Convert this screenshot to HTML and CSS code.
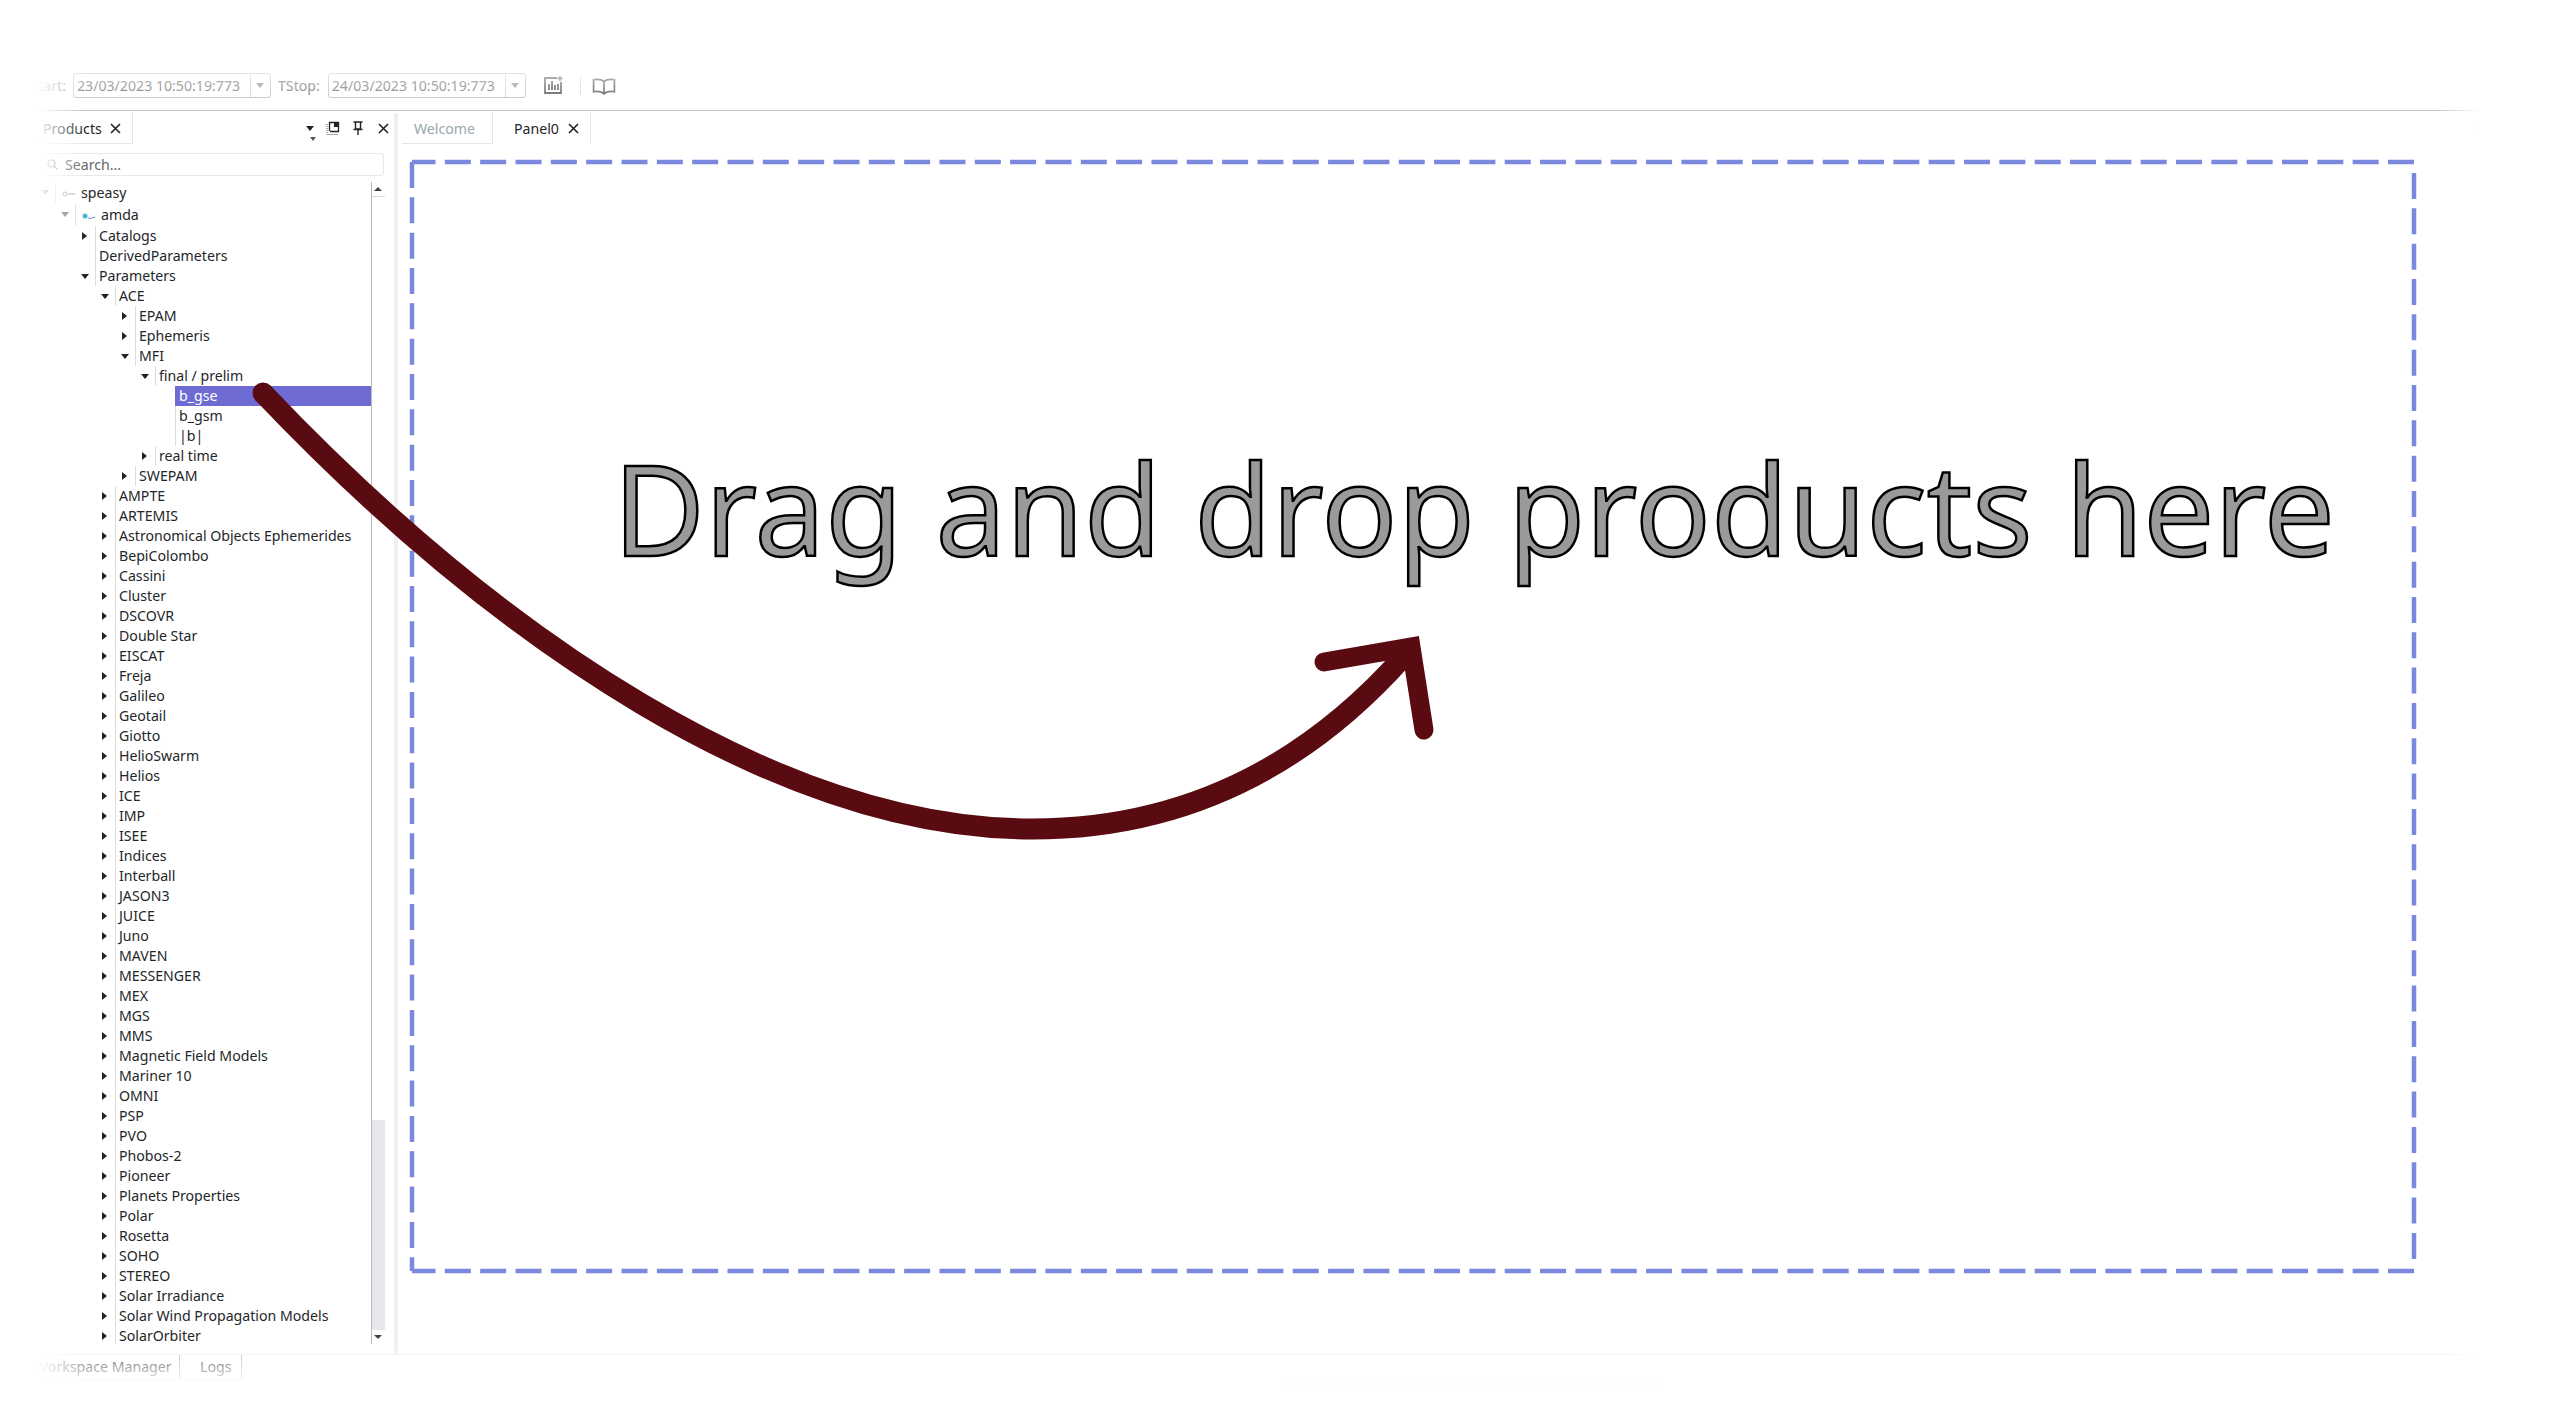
FILE: index.html
```html
<!DOCTYPE html>
<html lang="en">
<head>
    <meta charset="UTF-8">
    <title>SciQLop</title>
    <link rel="stylesheet" href="styles.css">
</head>
<body>
    <div class="app">
        <!-- Time range toolbar -->
        <div class="toolbar">
            <span class="tb-label tstart">TStart:</span>
            <div class="date-field"><span class="date-text">23/03/2023 10:50:19:773</span><span class="date-btn"></span></div>
            <span class="tb-label tstop">TStop:</span>
            <div class="date-field"><span class="date-text">24/03/2023 10:50:19:773</span><span class="date-btn"></span></div>
            <svg class="tb-icon chart" width="19" height="18" viewBox="0 0 19 18" fill="none" stroke="#4a4a4a" stroke-width="1.8">
                <path d="M13 2H1v15h16V6"/>
                <path d="M5 14V8M8 14V5M11 14V9M14 14V8" stroke-width="1.9"/>
                <path d="M16 0v5M13.5 2.5h5" stroke-width="1.3"/>
            </svg>
            <span class="tb-sep"></span>
            <svg class="tb-icon book" width="24" height="17" viewBox="0 0 23 16" fill="none" stroke="#4a4a4a" stroke-width="1.6">
                <path d="M11.5 3C9 1 5 1 1.5 1.5V13C5 12.5 9 12.5 11.5 15C14 12.5 18 12.5 21.5 13V1.5C18 1 14 1 11.5 3V15"/>
            </svg>
        </div>

        <div class="main">
            <!-- Products dock -->
            <div class="dock">
                <div class="dock-head">
                    <div class="dock-tab">Products
                        <svg class="close" width="11" height="11" viewBox="0 0 11 11"><path d="M1 1l9 9M10 1l-9 9"/></svg>
                    </div>
                    <div class="dock-actions">
                        <span class="menu-arrow"></span>
                        <svg width="14" height="14" viewBox="0 0 14 14" fill="none" stroke="#222">
                            <path d="M3.5 10V1.5h9v9H4" stroke-width="1.3"/>
                            <path d="M8 1.5h5V6H8z" fill="#222" stroke="none"/>
                            <path d="M1 3v10.5h11" stroke-dasharray="1 1" stroke-width="1" stroke="#555"/>
                        </svg>
                        <svg class="pin" width="10" height="14" viewBox="0 0 10 14" fill="none" stroke="#222" stroke-width="1.4">
                            <path d="M2.5 1h5v7h-5zM0.5 8.5h9M5 9v5M0.5 1h9"/>
                        </svg>
                        <svg class="close" width="11" height="11" viewBox="0 0 11 11"><path d="M1 1l9 9M10 1l-9 9"/></svg>
                    </div>
                </div>
                <div class="search">
                    <svg width="11" height="11" viewBox="0 0 11 11" fill="none" stroke="#888" stroke-width="1.2"><circle cx="4.5" cy="4.5" r="3.5"/><path d="M7 7l3.5 3.5"/></svg>
                    <span>Search...</span>
                </div>
                <div class="tree-wrap">
                    <div class="tree">
                        <div class="row root lv0 open"><span class="label"><svg class="node-icon" width="14" height="8" viewBox="0 0 14 8" fill="none"><circle cx="3" cy="4" r="2" stroke="#9ab"/><path d="M6 4h7" stroke="#999"/></svg>speasy</span></div>
                        <div class="row root lv1 open"><span class="label"><svg class="node-icon" width="14" height="8" viewBox="0 0 14 8" fill="none"><circle cx="3" cy="4" r="2.5" fill="#4ab0dc"/><path d="M6 6c2 1 4 0 7-1" stroke="#4a90c0"/></svg>amda</span></div>
                        <div class="row lv2 closed"><span class="label">Catalogs</span></div>
                        <div class="row lv2"><span class="label">DerivedParameters</span></div>
                        <div class="row lv2 open"><span class="label">Parameters</span></div>
                        <div class="row lv3 open"><span class="label">ACE</span></div>
                        <div class="row lv4 closed"><span class="label">EPAM</span></div>
                        <div class="row lv4 closed"><span class="label">Ephemeris</span></div>
                        <div class="row lv4 open"><span class="label">MFI</span></div>
                        <div class="row lv5 open"><span class="label">final / prelim</span></div>
                        <div class="row lv6 selected"><span class="label">b_gse</span></div>
                        <div class="row lv6"><span class="label">b_gsm</span></div>
                        <div class="row lv6"><span class="label">|b|</span></div>
                        <div class="row lv5 closed"><span class="label">real time</span></div>
                        <div class="row lv4 closed"><span class="label">SWEPAM</span></div>
                        <div class="row lv3 closed"><span class="label">AMPTE</span></div>
                        <div class="row lv3 closed"><span class="label">ARTEMIS</span></div>
                        <div class="row lv3 closed"><span class="label">Astronomical Objects Ephemerides</span></div>
                        <div class="row lv3 closed"><span class="label">BepiColombo</span></div>
                        <div class="row lv3 closed"><span class="label">Cassini</span></div>
                        <div class="row lv3 closed"><span class="label">Cluster</span></div>
                        <div class="row lv3 closed"><span class="label">DSCOVR</span></div>
                        <div class="row lv3 closed"><span class="label">Double Star</span></div>
                        <div class="row lv3 closed"><span class="label">EISCAT</span></div>
                        <div class="row lv3 closed"><span class="label">Freja</span></div>
                        <div class="row lv3 closed"><span class="label">Galileo</span></div>
                        <div class="row lv3 closed"><span class="label">Geotail</span></div>
                        <div class="row lv3 closed"><span class="label">Giotto</span></div>
                        <div class="row lv3 closed"><span class="label">HelioSwarm</span></div>
                        <div class="row lv3 closed"><span class="label">Helios</span></div>
                        <div class="row lv3 closed"><span class="label">ICE</span></div>
                        <div class="row lv3 closed"><span class="label">IMP</span></div>
                        <div class="row lv3 closed"><span class="label">ISEE</span></div>
                        <div class="row lv3 closed"><span class="label">Indices</span></div>
                        <div class="row lv3 closed"><span class="label">Interball</span></div>
                        <div class="row lv3 closed"><span class="label">JASON3</span></div>
                        <div class="row lv3 closed"><span class="label">JUICE</span></div>
                        <div class="row lv3 closed"><span class="label">Juno</span></div>
                        <div class="row lv3 closed"><span class="label">MAVEN</span></div>
                        <div class="row lv3 closed"><span class="label">MESSENGER</span></div>
                        <div class="row lv3 closed"><span class="label">MEX</span></div>
                        <div class="row lv3 closed"><span class="label">MGS</span></div>
                        <div class="row lv3 closed"><span class="label">MMS</span></div>
                        <div class="row lv3 closed"><span class="label">Magnetic Field Models</span></div>
                        <div class="row lv3 closed"><span class="label">Mariner 10</span></div>
                        <div class="row lv3 closed"><span class="label">OMNI</span></div>
                        <div class="row lv3 closed"><span class="label">PSP</span></div>
                        <div class="row lv3 closed"><span class="label">PVO</span></div>
                        <div class="row lv3 closed"><span class="label">Phobos-2</span></div>
                        <div class="row lv3 closed"><span class="label">Pioneer</span></div>
                        <div class="row lv3 closed"><span class="label">Planets Properties</span></div>
                        <div class="row lv3 closed"><span class="label">Polar</span></div>
                        <div class="row lv3 closed"><span class="label">Rosetta</span></div>
                        <div class="row lv3 closed"><span class="label">SOHO</span></div>
                        <div class="row lv3 closed"><span class="label">STEREO</span></div>
                        <div class="row lv3 closed"><span class="label">Solar Irradiance</span></div>
                        <div class="row lv3 closed"><span class="label">Solar Wind Propagation Models</span></div>
                        <div class="row lv3 closed"><span class="label">SolarOrbiter</span></div>
                    </div>
                    <div class="scrollbar">
                        <div class="sb-btn"><span class="sb-up"></span></div>
                        <div class="sb-handle"></div>
                        <div class="sb-track"></div>
                        <div class="sb-btn"><span class="sb-down"></span></div>
                    </div>
                </div>
            </div>
            <div class="sash"></div>

            <!-- Central panel area -->
            <div class="center">
                <div class="center-tabs">
                    <div class="tab inactive">Welcome</div>
                    <div class="tab active">Panel0
                        <svg class="close" width="11" height="11" viewBox="0 0 11 11"><path d="M1 1l9 9M10 1l-9 9"/></svg>
                    </div>
                    <span class="tab-list-arrow"></span>
                </div>
                <div class="drop-zone">
                    <svg class="drop-border" width="2002" height="1109" viewBox="0 0 2002 1109">
                        <path d="M2002 0H0"/>
                        <path d="M2002 11V1101"/>
                        <path d="M2002 1109H0"/>
                        <path d="M0 0V1109"/>
                    </svg>
                    <div class="drop-text">Drag and drop products here</div>
                </div>
            </div>
        </div>

        <div class="bottom-tabs">
            <div class="bottom-tab workspace">Workspace Manager</div>
            <div class="bottom-tab logs">Logs</div>
        </div>
        <div class="status">
            <span class="status-bar"></span>
            <span class="status-text"></span>
        </div>
    </div>

    <!-- Annotation drawn over the screenshot -->
    <svg class="arrow" width="2560" height="1408" viewBox="0 0 2560 1408" fill="none" stroke="#5a0b12">
        <path d="M263 393C498 640 780 829 1032 829C1190 829 1310 762 1404 656" stroke-width="21"/>
        <circle cx="263" cy="393" r="10.5" fill="#5a0b12" stroke="none"/>
        <path d="M1324 662L1411 647L1424 730" stroke-width="19" stroke-linecap="round" stroke-miterlimit="10"/>
    </svg>
    <div class="vignette"></div>
</body>
</html>
```

FILE: styles.css
```css
/* Basic page */
html, body {
    margin: 0;
    padding: 0;
    background: #fff;
}

body {
    position: relative;
    width: 2560px;
    height: 1408px;
    overflow: hidden;
    font-family: "Noto Sans", sans-serif;
    font-size: 14.15px;
    color: #232629;
}

.app {
    display: flex;
    flex-direction: column;
    height: 1408px;
}

.close path {
    stroke: #222;
    stroke-width: 1.6;
    fill: none;
}

/* Toolbar */
.toolbar {
    flex: none;
    box-sizing: border-box;
    height: 111px;
    padding-top: 73px;
    border-bottom: 1px solid #c4c4c4;
    display: flex;
    align-items: flex-start;
}

.tb-label {
    line-height: 25px;
    color: #666;
}

.tstart {
    width: 66px;
    text-align: right;
    margin-right: 7px;
}

.tstop {
    margin: 0 8px 0 7px;
}

.date-field {
    box-sizing: border-box;
    width: 198px;
    height: 25px;
    border: 1px solid #bbb;
    border-radius: 3px;
    display: flex;
    align-items: center;
}

.date-text {
    flex: 1;
    padding-left: 3px;
    color: #666;
    white-space: nowrap;
}

.date-btn {
    flex: none;
    width: 19px;
    height: 23px;
    border-left: 1px solid #ccc;
    position: relative;
}

.date-btn::after {
    content: "";
    position: absolute;
    left: 5px;
    top: 9px;
    border: 4px solid transparent;
    border-top: 5px solid #888;
    border-bottom: 0;
}

.tb-icon.chart {
    margin: 3px 0 0 18px;
}

.tb-sep {
    width: 1px;
    height: 17px;
    margin: 4px 10px 0 17px;
    border-left: 1px dotted #aaa;
}

.tb-icon.book {
    margin-top: 5px;
}

/* Main area */
.main {
    flex: none;
    height: 1243px;
    display: flex;
}

.dock {
    flex: none;
    width: 394px;
}

.dock-head {
    height: 31px;
    margin-top: 2px;
    display: flex;
    justify-content: space-between;
}

.dock-tab {
    box-sizing: border-box;
    width: 133px;
    padding-left: 43px;
    border-right: 1px solid #e6e6e6;
    border-bottom: 1px solid #e6e6e6;
    display: flex;
    align-items: center;
    gap: 8px;
}

.dock-actions {
    width: 86px;
    margin-right: 5px;
    display: flex;
    align-items: center;
    position: relative;
}

.menu-arrow {
    width: 0;
    height: 0;
    margin-left: 3px;
    border: 4px solid transparent;
    border-top: 5px solid #222;
    border-bottom: 0;
}

.menu-arrow::after {
    content: "";
    position: absolute;
    left: 7px;
    top: 24px;
    border: 3px solid transparent;
    border-top: 4px solid #555;
    border-bottom: 0;
}

.dock-actions svg:nth-child(2) {
    margin-left: 12px;
    margin-top: -2px;
}

.pin {
    margin-left: 13px;
    margin-top: -2px;
}

.dock-actions .close {
    margin-left: 15px;
}

.search {
    box-sizing: border-box;
    height: 23px;
    margin: 9px 10px 0 40px;
    border: 1px solid #e8e8e8;
    border-radius: 3px;
    padding-left: 6px;
    display: flex;
    align-items: center;
    gap: 7px;
    color: #666;
}

/* Tree */
.tree-wrap {
    height: 1162px;
    margin-top: 6px;
    display: flex;
    overflow: hidden;
}

.tree {
    flex: none;
    width: 371px;
    overflow: hidden;
}

.row {
    height: 20px;
    display: flex;
    line-height: 20px;
    white-space: nowrap;
}

.root {
    height: 22px;
    line-height: 22px;
}

.label {
    flex: 1;
    position: relative;
    padding-left: 3px;
    border-left: 1px solid #dcdcdc;
}

.closed .label::before {
    content: "";
    position: absolute;
    left: -14px;
    top: 6px;
    border: 4px solid transparent;
    border-left: 5px solid #222;
    border-right: 0;
}

.open .label::before {
    content: "";
    position: absolute;
    left: -15px;
    top: 8px;
    border: 4px solid transparent;
    border-top: 5px solid #222;
    border-bottom: 0;
}

.root.open .label::before {
    border-top-color: #666;
}

.node-icon {
    margin: 0 5px 0 3px;
}

.lv0 { padding-left: 55px; }
.lv1 { padding-left: 75px; }
.lv2 { padding-left: 95px; }
.lv3 { padding-left: 115px; }
.lv4 { padding-left: 135px; }
.lv5 { padding-left: 155px; }
.lv6 { padding-left: 175px; }

.selected .label {
    background: #6f6bd4;
    border-left-color: #6f6bd4;
    color: #fff;
}

.scrollbar {
    flex: none;
    box-sizing: border-box;
    width: 14px;
    height: 1162px;
    border-left: 1px solid #bbb;
    display: flex;
    flex-direction: column;
}

.sb-btn {
    flex: none;
    height: 14px;
    position: relative;
}

.sb-up, .sb-down {
    position: absolute;
    left: 2px;
    top: 5px;
    border: 4px solid transparent;
    border-bottom: 0;
    border-top: 4px solid #444;
}

.sb-up {
    border-top: 0;
    border-bottom: 4px solid #444;
}

.sb-handle {
    flex: none;
    height: 923px;
    border-top: 1px solid #ddd;
}

.sb-track {
    flex: 1;
    background: #e6e7ec;
}

.sash {
    flex: none;
    width: 4px;
    margin: 2px 0 0;
    background: #eff0f4;
}

/* Central area */
.center {
    flex: 1;
}

.center-tabs {
    height: 31px;
    margin-top: 2px;
    padding-left: 4px;
    display: flex;
    gap: 10px;
    align-items: stretch;
}

.tab {
    box-sizing: border-box;
    border-right: 1px solid #e6e6e6;
    display: flex;
    align-items: center;
}

.inactive {
    width: 91px;
    padding-left: 12px;
    color: #9aa6ac;
    border-bottom: 1px solid #e6e6e6;
}

.active {
    width: 88px;
    padding-left: 11px;
    gap: 9px;
}

.tab-list-arrow {
    margin: 14px 0 0 1876px;
    width: 0;
    height: 0;
    border: 4px solid transparent;
    border-top: 5px solid #999;
    border-bottom: 0;
}

.drop-zone {
    position: relative;
    width: 2002px;
    height: 1109px;
    margin: 18px 0 0 14px;
}

.drop-border {
    position: absolute;
    left: 0;
    top: 0;
    overflow: visible;
    fill: none;
    stroke: #7a88dd;
    stroke-width: 4.5;
    stroke-dasharray: 26 9.33;
}

.drop-text {
    padding: 259px 0 0 201px;
    font-size: 126px;
    line-height: 172px;
    white-space: nowrap;
    color: #9a9a9a;
    -webkit-text-stroke: 2.5px #000;
}

/* Bottom tabs */
.bottom-tabs {
    flex: none;
    box-sizing: border-box;
    height: 26px;
    border-top: 1px solid #f0f0f0;
    display: flex;
    color: #444;
}

.bottom-tab {
    box-sizing: border-box;
    height: 25px;
    line-height: 24px;
    border-right: 1px solid #bbb;
    border-bottom: 1px solid #ddd;
}

.workspace {
    width: 180px;
    padding-left: 35px;
}

.logs {
    width: 62px;
    padding-left: 20px;
}

.status {
    flex: 1;
    padding: 3px 0 0 1282px;
    display: flex;
    align-items: flex-start;
}

.status-bar {
    width: 378px;
    height: 10px;
    background: #ececf6;
}

.status-text {
    width: 300px;
    height: 5px;
    margin: 6px 0 0 106px;
    background: #f0f0f0;
}

/* Overlays */
.arrow {
    position: absolute;
    left: 0;
    top: 0;
}

.vignette {
    position: absolute;
    left: 0;
    top: 0;
    width: 2560px;
    height: 1408px;
    pointer-events: none;
    background:
        linear-gradient(to right, #fff 38px, rgba(255,255,255,0) 85px),
        linear-gradient(to left, #fff 80px, rgba(255,255,255,0) 125px),
        linear-gradient(to bottom, #fff 50px, rgba(255,255,255,0) 110px),
        linear-gradient(to top, #fff 22px, rgba(255,255,255,0) 62px);
}
```
